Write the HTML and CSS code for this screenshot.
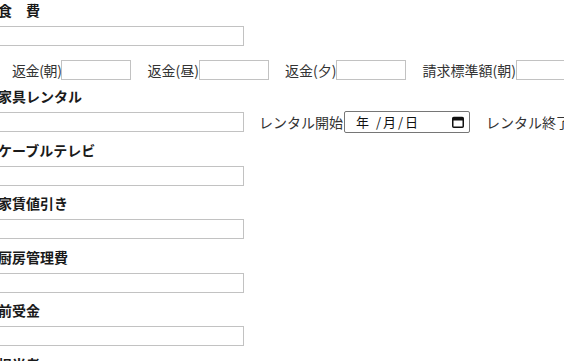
FILE: index.html
```html
<!DOCTYPE html>
<html lang="ja">
<head>
<meta charset="utf-8">
<link rel="stylesheet" href="styles.css">
</head>
<body>
<div class="page">
  <div class="label first">食　費</div>
  <input class="text" type="text">
  <div class="refund-row">
    <span class="item first-item">返金(朝)<input class="small" type="text"></span>
    <span class="item">返金(昼)<input class="small" type="text"></span>
    <span class="item">返金(夕)<input class="small" type="text"></span>
    <span class="item">請求標準額(朝)<input class="small" type="text"></span>
  </div>

  <div class="label">家具レンタル</div>
  <div class="input-row">
    <input class="text" type="text">
    <span class="item rental">レンタル開始</span>
    <span class="date-box">
      <span class="date-text">年 /月/日</span>
      <svg class="cal" width="12" height="12" viewBox="0 0 12 12">
        <rect x="0.75" y="1.5" width="10.5" height="9.75" rx="1" fill="none" stroke="#111" stroke-width="1.5"/>
        <rect x="0.75" y="1.5" width="10.5" height="3" fill="#111"/>
      </svg>
    </span>
    <span class="item">レンタル終了</span>
  </div>

  <div class="label">ケーブルテレビ</div>
  <input class="text" type="text">

  <div class="label">家賃値引き</div>
  <input class="text" type="text">

  <div class="label">厨房管理費</div>
  <input class="text" type="text">

  <div class="label">前受金</div>
  <input class="text" type="text">

  <div class="label">担当者</div>
  <input class="text" type="text">
</div>
</body>
</html>
```

FILE: styles.css
```css
html, body {
  margin: 0;
  padding: 0;
  overflow: hidden;
  background: #fff;
}

.page {
  margin-left: -2px;
  width: 700px;
  font-family: "Noto Sans CJK JP", "Noto Sans", sans-serif;
  font-size: 14px;
  color: #333;
  display: flex;
  flex-direction: column;
  align-items: flex-start;
}

.label {
  font-weight: bold;
  color: #1a1a1a;
  line-height: 20px;
  height: 20px;
  margin-top: 7.5px;
  margin-bottom: 6px;
  white-space: nowrap;
}

.label.first {
  margin-top: 0;
}

input {
  box-sizing: border-box;
  margin: 0;
  padding: 1px 2px;
  height: 20px;
  border: 1px solid #c2c2c2;
  border-radius: 0;
  font: inherit;
  background: #fff;
}

.text {
  width: 246px;
}

.small {
  width: 70px;
}

.refund-row {
  display: flex;
  align-items: center;
  height: 20px;
  margin-top: 14px;
  margin-bottom: 0;
  white-space: nowrap;
}

.refund-row + .label {
  margin-top: 6px;
}

.item {
  display: flex;
  align-items: center;
  margin-left: 16px;
  line-height: 20px;
  white-space: nowrap;
}

.first-item {
  margin-left: 14px;
  letter-spacing: -0.4px;
}

.rental {
  margin-left: 15px;
}

.input-row {
  display: flex;
  align-items: center;
  height: 20px;
  white-space: nowrap;
}

.date-box {
  box-sizing: border-box;
  display: flex;
  align-items: center;
  justify-content: space-between;
  width: 126px;
  height: 22px;
  margin-left: 1px;
  border: 1px solid #767676;
  border-radius: 2px;
  padding: 0 5px 0 11px;
  font-size: 13px;
  color: #111;
}

.date-text {
  line-height: 18px;
  letter-spacing: 2px;
  white-space: pre;
}

.cal {
  display: block;
}
```
